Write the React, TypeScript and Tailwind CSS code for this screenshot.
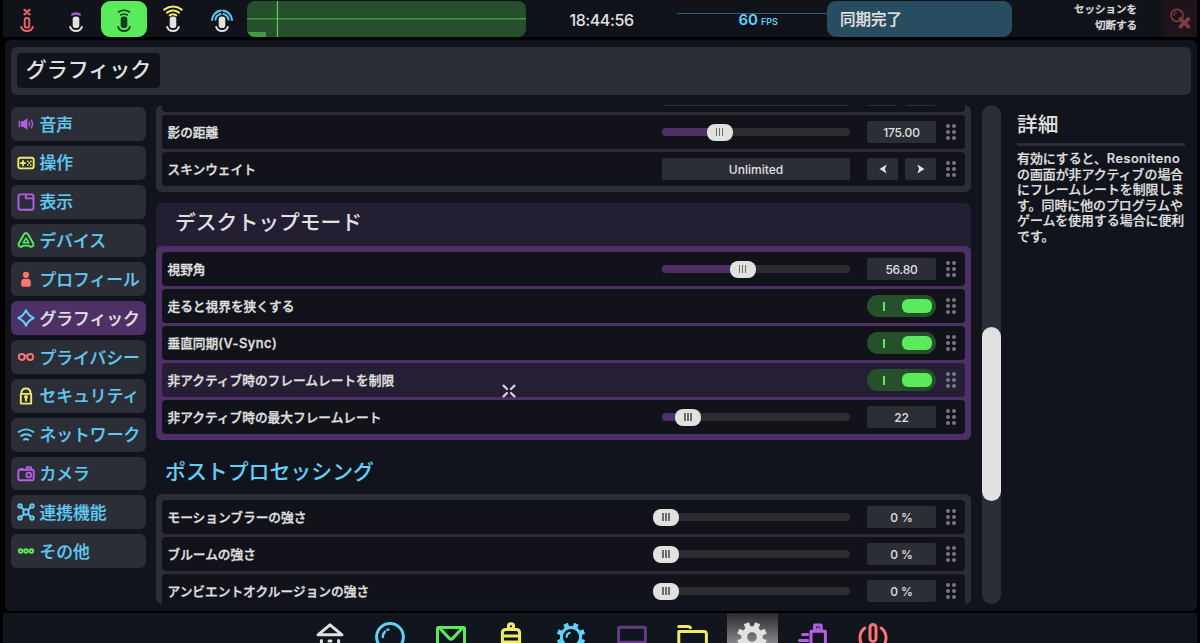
import React from 'react';
import clsx from 'clsx';

const LATIN = "font-['Inter','Noto_Sans_CJK_JP',sans-serif]";

interface IconProps {
  children: React.ReactNode;
  color: string;
}

// Sidebar glyph, 18px box
const SideIcon = ({ children, color }: IconProps) => (
  <svg
    viewBox="0 0 18 18"
    className="w-[18px] h-[18px] shrink-0"
    fill="none"
    stroke={color}
    strokeWidth={1.9}
    strokeLinecap="round"
    strokeLinejoin="round"
  >
    {children}
  </svg>
);

const CATEGORIES = [
  {
    label: '音声',
    icon: (
      <SideIcon color="#b45fe6">
        <path d="M3.8 6.2H6.2L10.4 3V15L6.2 11.8H3.8Z" fill="#b45fe6" stroke="none" />
        <path d="M2.3 6.3V11.7M12.2 7a3.5 3.5 0 0 1 0 4M14.2 5.2a6.5 6.5 0 0 1 0 7.6" strokeWidth={1.3} />
      </SideIcon>
    ),
  },
  {
    label: '操作',
    icon: (
      <SideIcon color="#f0ea6b">
        <rect x="1.3" y="3.8" width="15.4" height="10.6" rx="2.2" />
        <path d="M6 7v4.4M3.8 9.2h4.4" strokeWidth={1.8} />
        <path d="M10.8 7.4h.1M13.8 7.4h.1M12.3 9.2h.1M10.8 11h.1M13.8 11h.1" strokeWidth={1.7} />
      </SideIcon>
    ),
  },
  {
    label: '表示',
    icon: (
      <SideIcon color="#b45fe6">
        <rect x="1.5" y="1.4" width="15" height="15.4" rx="1.8" />
        <path d="M8.8 2v3.4h7.4" />
      </SideIcon>
    ),
  },
  {
    label: 'デバイス',
    icon: (
      <SideIcon color="#59eb5c">
        <path d="M7 3.3Q9 .8 11 3.3L16.3 12.4Q17 16 13.8 15.8L11.6 14.6H6.4L4.2 15.8Q1 16 1.7 12.4Z" />
        <path d="M9 7.2L11.8 11.8H6.2Z" strokeWidth={1.6} />
      </SideIcon>
    ),
  },
  {
    label: 'プロフィール',
    icon: (
      <SideIcon color="#ff7373">
        <circle cx="9" cy="4.8" r="3.1" fill="#ff7373" stroke="none" />
        <path d="M4.2 15V12.4Q4.2 8.8 7.2 8.8H10.8Q13.8 8.8 13.8 12.4V15Q13.8 16.8 12 16.8H6Q4.2 16.8 4.2 15Z" fill="#ff7373" stroke="none" />
      </SideIcon>
    ),
  },
  {
    label: 'グラフィック',
    active: true,
    icon: (
      <SideIcon color="#61d1fa">
        <path d="M9 1.2Q11.2 6.8 16.8 9Q11.2 11.2 9 16.8Q6.8 11.2 1.2 9Q6.8 6.8 9 1.2Z" />
      </SideIcon>
    ),
  },
  {
    label: 'プライバシー',
    icon: (
      <SideIcon color="#ff7373">
        <circle cx="4.8" cy="9" r="3" />
        <circle cx="13.2" cy="9" r="3" />
        <path d="M7.6 8Q9 7 10.4 8" />
      </SideIcon>
    ),
  },
  {
    label: 'セキュリティ',
    icon: (
      <SideIcon color="#f0ea6b">
        <path d="M3.8 6.9V16.6H14.2V6.9ZM4.4 6.5Q4.4 1.5 9 1.5Q13.6 1.5 13.6 6.5" />
        <circle cx="9" cy="10" r="1" fill="#f0ea6b" />
        <path d="M9 10.5v3.2" />
      </SideIcon>
    ),
  },
  {
    label: 'ネットワーク',
    icon: (
      <SideIcon color="#61d1fa">
        <path d="M1.6 6Q9 .8 16.4 6M4.2 9.9Q9 6.5 13.8 9.9M6.9 13.7Q9 12.3 11.1 13.7" />
      </SideIcon>
    ),
  },
  {
    label: 'カメラ',
    icon: (
      <SideIcon color="#b45fe6">
        <path d="M2.8 4.8H15.2Q16.7 4.8 16.7 6.5V13.8Q16.7 15.2 15.2 15.2H2.8Q1.3 15.2 1.3 13.8V6.5Q1.3 4.8 2.8 4.8Z" />
        <circle cx="11.8" cy="10" r="2.4" />
        <path d="M9.8 4.6V2.2H14V4.6M3.6 4H5.8" />
      </SideIcon>
    ),
  },
  {
    label: '連携機能',
    icon: (
      <SideIcon color="#61d1fa">
        <circle cx="3" cy="3" r="1.8" />
        <circle cx="15" cy="3" r="1.8" />
        <circle cx="3" cy="15" r="1.8" />
        <circle cx="15" cy="15" r="1.8" />
        <circle cx="9" cy="9" r="2.7" />
        <path d="M4.4 4.4L7 7M13.6 4.4L11 7M4.4 13.6L7 11M13.6 13.6L11 11" />
      </SideIcon>
    ),
  },
  {
    label: 'その他',
    icon: (
      <SideIcon color="#59eb5c">
        <circle cx="3.6" cy="9" r="1.8" />
        <circle cx="9" cy="9" r="1.8" />
        <circle cx="14.4" cy="9" r="1.8" />
      </SideIcon>
    ),
  },
];

interface MicProps {
  children?: React.ReactNode;
  color: string;
  hollow?: boolean;
}

const Mic = ({ children, color, hollow }: MicProps) => (
  <svg viewBox="0 0 24 36" className="w-6 h-9" fill="none" stroke={color} strokeWidth={1.9} strokeLinecap="round">
    {hollow ? (
      <rect x="9.7" y="17" width="4.6" height="9.6" rx="2.2" />
    ) : (
      <rect x="8.7" y="15.4" width="6.6" height="11.6" rx="2.8" fill={color} stroke="none" />
    )}
    <path d="M6.2 26Q7.4 30 12 30Q16.6 30 17.8 26" strokeWidth={2} />
    {children}
  </svg>
);

const TopBar = () => (
  <header className="flex h-[37px] pt-px ml-[3px] mr-[3px] bg-[#11131b] text-[#e1e1e0]">
    <div className="flex w-[244px] shrink-0">
      <div className="w-[47px] h-9 flex justify-center">
        <Mic color="#f0666a" hollow>
          <path d="M9.4 8.8L14.6 13.4M14.6 8.8L9.4 13.4" strokeWidth={2.1} />
        </Mic>
      </div>
      <div className="w-[51px] h-9 flex justify-center">
        <Mic color="#e1e1e0">
          <path d="M8.2 13.6Q12 11.4 15.8 13.6" stroke="#a457d8" strokeWidth={2.3} />
        </Mic>
      </div>
      <div className="w-[46px] h-9 rounded-[9px] bg-[#59eb5c] flex justify-center">
        <Mic color="#163d22">
          <path d="M6.4 11Q12 7.4 17.6 11M8.7 14Q12 12 15.3 14" strokeWidth={1.5} />
        </Mic>
      </div>
      <div className="w-[51px] h-9 flex justify-center">
        <Mic color="#e1e1e0">
          <path d="M3.2 8.6Q12 2.2 20.8 8.6M6 11.6Q12 7.2 18 11.6M8.7 14.4Q12 12 15.3 14.4" stroke="#f0ea6b" strokeWidth={2} />
        </Mic>
      </div>
      <div className="w-[47px] h-9 flex justify-center">
        <Mic color="#e1e1e0">
          <path
            d="M2 19A10 10 0 0 1 10.8 9.6M13.2 9.6A10 10 0 0 1 22 19M5.4 18.6A7 7 0 0 1 10.6 13M13.4 13A7 7 0 0 1 18.6 18.6"
            stroke="#61bfe6"
            strokeWidth={2.1}
          />
        </Mic>
      </div>
    </div>

    {/* Voice level meter */}
    <svg viewBox="0 0 279 36" className="w-[279px] h-9 shrink-0 rounded-[8px] bg-[#26502c]">
      <rect x="0" y="31" width="19" height="5" fill="#409c44" />
      <rect x="0" y="17" width="279" height="1.5" fill="#3f9a45" />
      <rect x="29.8" y="0" width="1.3" height="36" fill="#59c85c" />
    </svg>

    <div className={clsx('w-[151px] shrink-0 flex items-center justify-center pt-px text-[16px] tracking-[-0.4px] font-medium', LATIN)}>
      18:44:56
    </div>

    <div className="w-[150px] shrink-0 flex flex-col">
      <div className="h-px mt-3 bg-[#2b6076]" />
      <div className={clsx('-mt-[5px] h-[20px] pl-[61.5px] text-[#61d1fa] leading-[20px] font-semibold', LATIN)}>
        <span className="text-[15px]">60</span>
        <span className="text-[9px] ml-[3px]">FPS</span>
      </div>
    </div>

    <div className="w-[185px] h-9 shrink-0 rounded-[9px] bg-[#294d60] flex items-center pl-[13px] pb-px text-[15.5px] font-medium [-webkit-text-stroke:0.2px]">
      同期完了
    </div>

    <div className="flex-1 pr-[26px] text-right text-[10.5px] leading-[15.5px] font-medium [-webkit-text-stroke:0.3px]">
      セッションを
      <br />
      切断する
    </div>
    <div className="w-[34px] shrink-0 bg-[#1f141b] flex items-center justify-center">
      <svg viewBox="0 0 24 24" className="w-6 h-6" fill="none" stroke="#7d3c43">
        <circle cx="9" cy="8.4" r="6" strokeWidth={1.6} />
        <path d="M5.8 8.8A3.3 3.3 0 0 1 8.8 5.3" strokeWidth={1.3} />
        <path d="M12.4 12L20.4 19.6M20.4 12L12.4 19.6" strokeWidth={3.8} strokeLinecap="round" />
      </svg>
    </div>
  </header>
);

const DragDots = () => (
  <div className="w-[10px] ml-[10px] mr-[9px] grid grid-cols-2 gap-x-[2px] gap-y-[2px] shrink-0">
    {[0, 1, 2, 3, 4, 5].map((i) => (
      <span key={i} className="w-[3.8px] h-[3.8px] rounded-full bg-[#77787e]" />
    ))}
  </div>
);

const ValueBox = ({ children }: { children: React.ReactNode }) => (
  <div className={clsx('w-[69px] h-[22px] rounded-[2px] bg-[#2b2e36] flex items-center justify-center pt-px text-[12px] tracking-[-0.2px] font-medium', LATIN)}>
    {children}
  </div>
);

// offset: thumb centre from the start of the 188px track
const Slider = ({ offset }: { offset: number }) => (
  <div className="relative w-[188px] h-2 rounded-[4px] bg-[#2b2d33] mr-[17px]">
    <div className="h-2 rounded-l-[4px] bg-[#4d3166]" style={{ width: offset }} />
    <div
      className="absolute top-[-4.5px] -ml-[13px] w-[26px] h-[17px] rounded-[8px] bg-[#e1e1e0] flex items-center justify-center gap-[1.4px]"
      style={{ left: offset }}
    >
      <i className="w-[1.6px] h-[8.5px] bg-[#6c6c70]" />
      <i className="w-[1.6px] h-[8.5px] bg-[#6c6c70]" />
      <i className="w-[1.6px] h-[8.5px] bg-[#6c6c70]" />
    </div>
  </div>
);

const Toggle = () => (
  <div className="w-[69px] h-[22px] rounded-full bg-[#26502c] flex items-center pl-[16px] pr-1">
    <div className="w-[1.6px] h-[9px] bg-[#59eb5c]" />
    <div className="ml-auto w-[30px] h-[14px] rounded-[6px] bg-[#59eb5c]" />
  </div>
);

const Arrow = ({ flip }: { flip?: boolean }) => (
  <div className="w-[31px] h-[22px] rounded-[2px] bg-[#2b2e36] flex items-center justify-center">
    <svg viewBox="0 0 8 10" className={clsx('w-2 h-[10px]', flip && 'rotate-180')}>
      <path d="M.6 5L7.6 .6L6 5L7.6 9.4Z" fill="#e1e1e0" />
    </svg>
  </div>
);

const Choice = ({ text }: { text: string }) => (
  <>
    <div className={clsx('w-[188px] h-[22px] mr-[17px] rounded-[2px] bg-[#2b2e36] flex items-center justify-center pt-px text-[12px] font-medium', LATIN)}>
      {text}
    </div>
    <div className="w-[69px] flex justify-between">
      <Arrow />
      <Arrow flip />
    </div>
  </>
);

interface RowProps {
  label: React.ReactNode;
  hovered?: boolean;
  children: React.ReactNode;
}

const Row = ({ label, hovered, children }: RowProps) => (
  <div className={clsx('h-[34px] shrink-0 rounded-[4px] flex items-center pl-[5.5px]', hovered ? 'bg-[#261e34]' : 'bg-[#11121a]')}>
    <span className="flex-1 text-[12.7px] font-medium whitespace-nowrap [-webkit-text-stroke:0.3px]">{label}</span>
    {children}
    <DragDots />
  </div>
);

const SliderRow = ({ label, offset, value }: { label: string; offset: number; value: string }) => (
  <Row label={label}>
    <Slider offset={offset} />
    <ValueBox>{value}</ValueBox>
  </Row>
);

const Settings = () => (
  <div className="w-[815px] h-[499px] shrink-0 overflow-hidden rounded-[6px]">
    <div className="-mt-[32.5px] flex flex-col">
      <div className="rounded-[6px] bg-[#2b2e36] p-[6px] flex flex-col gap-[3px]">
        <Row label="">
          <Choice text="" />
        </Row>
        <SliderRow label="影の距離" offset={57.5} value="175.00" />
        <Row label="スキンウェイト">
          <Choice text="Unlimited" />
        </Row>
      </div>

      <h2 className="mt-[11px] h-[49px] pb-[12px] -mb-[6px] rounded-t-[7px] bg-[#241e33] pl-[19px] flex items-center text-[20.8px] font-medium">
        デスクトップモード
      </h2>
      <div className="rounded-[6px] bg-[#4d3166] p-[6px] flex flex-col gap-[3px]">
        <SliderRow label="視野角" offset={80.5} value="56.80" />
        <Row label="走ると視界を狭くする">
          <Toggle />
        </Row>
        <Row label={<>垂直同期<span className={clsx('text-[13px] tracking-[0.45px] font-medium', LATIN)}>(V-Sync)</span></>}>
          <Toggle />
        </Row>
        <Row label="非アクティブ時のフレームレートを制限" hovered>
          <Toggle />
        </Row>
        <SliderRow label="非アクティブ時の最大フレームレート" offset={26} value="22" />
      </div>

      <h2 className="h-[54px] pt-[8px] pl-[9px] flex items-center text-[20.9px] font-medium text-[#61d1fa]">
        ポストプロセッシング
      </h2>
      <div className="rounded-[6px] bg-[#2b2e36] p-[6px] flex flex-col gap-[3px]">
        <SliderRow label="モーションブラーの強さ" offset={4} value="0 %" />
        <SliderRow label="ブルームの強さ" offset={4} value="0 %" />
        <SliderRow label="アンビエントオクルージョンの強さ" offset={4} value="0 %" />
      </div>
    </div>
  </div>
);

interface DockIconProps {
  children: React.ReactNode;
  color: string;
  active?: boolean;
}

const DockIcon = ({ children, color, active }: DockIconProps) => (
  <div className="w-[60.3px] h-[30px] shrink-0 flex justify-center">
    <div className={clsx('w-[51px] flex justify-center', active && 'bg-linear-to-b from-[#2b2b2f] to-[#85858a]')}>
      <svg
        viewBox="0 0 34 34"
        className="w-[34px] h-[34px] shrink-0 mt-[7px]"
        fill="none"
        stroke={color}
        strokeWidth={3}
        strokeLinejoin="round"
        strokeLinecap="round"
      >
        {children}
      </svg>
    </div>
  </div>
);

const Teeth = ({ inner, outer, width }: { inner: number; outer: number; width: number }) => (
  <>
    {[22.5, 67.5, 112.5, 157.5, 202.5, 247.5, 292.5, 337.5].map((deg) => (
      <path key={deg} d={`M17 ${17 - inner}V${17 - outer}`} strokeWidth={width} strokeLinecap="butt" transform={`rotate(${deg} 17 17)`} />
    ))}
  </>
);

const Dock = () => (
  <footer className="mt-[2px] h-[30px] mx-[3px] bg-[#11151d] flex justify-center overflow-hidden">
    <div className="flex pl-[3px]">
      <DockIcon color="#e1e1e0">
        <path d="M17 4.8L29 14.8H5Z" />
        <path d="M8.4 20.6v10h17.2V20.6M16 21h2" />
      </DockIcon>
      <DockIcon color="#61d1fa">
        <circle cx="17" cy="17" r="13.4" />
        <path d="M9.8 17Q9.8 13.6 12 11.6M14.5 9.8L15.4 9.6" strokeWidth={2.5} />
      </DockIcon>
      <DockIcon color="#59eb5c">
        <rect x="3.5" y="7.4" width="27" height="20" rx="1" />
        <path d="M6.5 9L15.3 18.4Q17 20 18.7 18.4L27.5 9" />
      </DockIcon>
      <DockIcon color="#f0ea6b">
        <circle cx="17" cy="6.3" r="2.6" />
        <path d="M8.4 28V13Q8.4 9.6 11.8 9.6H22.2Q25.6 9.6 25.6 13V28M8.4 16H25.6M8.4 22H25.6" />
      </DockIcon>
      <DockIcon color="#61d1fa">
        <circle cx="17" cy="17" r="9.6" />
        <Teeth inner={9} outer={14.3} width={4.8} />
        <path d="M12.6 17A4.4 4.4 0 0 1 15.8 12.8" strokeWidth={2} />
      </DockIcon>
      <DockIcon color="#653a82">
        <rect x="3.6" y="7.2" width="26.8" height="15" rx="1" />
        <path d="M17 22.5v5" />
      </DockIcon>
      <DockIcon color="#f0ea6b">
        <path d="M3.8 28V11.4H29Q31.4 11.4 31.4 14V28" />
        <path d="M3.8 6.5H13.6L15.4 7.6" />
      </DockIcon>
      <DockIcon color="#e1e1e0" active>
        <circle cx="17" cy="17" r="7.8" strokeWidth={6} />
        <Teeth inner={9} outer={14.8} width={5.4} />
      </DockIcon>
      <DockIcon color="#b45fe6">
        <path d="M15 29V11.2H29.4V29M18.6 10.4V5H25.2V10.4M21.7 8.8h.4" />
        <path d="M6.6 14.6H11.6M3.6 20.6H11.6" />
      </DockIcon>
      <DockIcon color="#ff7373">
        <rect x="14" y="4.4" width="6" height="17" rx="3" />
        <path d="M8.8 8Q3.6 12 4 18.4Q4.4 24 8 28M25.2 8Q30.4 12 30 18.4Q29.6 24 26 28" />
      </DockIcon>
    </div>
  </footer>
);

export default function App() {
  return (
    <div className="relative w-[1200px] h-[643px] overflow-hidden bg-black text-[#e1e1e0] font-['Noto_Sans_CJK_JP','Noto_Sans',sans-serif]">
      <TopBar />

      <main className="mt-[3px] ml-[5px] mr-[3px] h-[571px] rounded-[6px] bg-[#11141c] pt-[7px] pl-[6px] pr-[6px]">
        <div className="h-[48px] rounded-[6px] bg-[#2b2e36] p-[6px]">
          <h1 className="w-[143px] h-[35px] rounded-[4px] bg-[#11131b] flex items-center justify-center text-[21px] font-medium pb-[4px]">
            グラフィック
          </h1>
        </div>

        <div className="flex mt-[9.5px]">
          <nav className="w-[135px] mt-[2.5px] flex flex-col gap-[5px] shrink-0">
            {CATEGORIES.map((item) => (
              <div
                key={item.label}
                className={clsx(
                  'h-[33.85px] rounded-[6px] flex items-center pl-[6px] gap-[4.5px] text-[16.8px] font-medium whitespace-nowrap [-webkit-text-stroke:0.2px]',
                  item.active ? 'bg-[#4d3166] text-[#e1e1e0]' : 'bg-[#2b2e36] text-[#61c8f0]',
                )}
              >
                {item.icon}
                <span className="leading-none">{item.label}</span>
              </div>
            ))}
          </nav>

          <div className="w-[10px] shrink-0" />
          <Settings />

          <div className="ml-[11px] w-[19px] h-[499.5px] shrink-0 rounded-full bg-[#2b2e36]">
            <div className="h-[222.5px]" />
            <div className="h-[174px] rounded-full bg-[#e1e1e1]" />
          </div>

          <aside className="ml-4 w-[170px] shrink-0 pt-[3px]">
            <h2 className="text-[20.7px] leading-[30px] font-medium">詳細</h2>
            <div className="mt-[5px] w-[168px] h-[3px] bg-[#2b2e36]" />
            <p className="mt-[4px] text-[12.9px] leading-[15.4px] font-medium whitespace-nowrap [-webkit-text-stroke:0.2px]">
              有効にすると、<span className={clsx('text-[12.8px] tracking-[0.5px]', LATIN)}>Resoniteno</span>
              <br />
              の画面が非アクティブの場合
              <br />
              にフレームレートを制限しま
              <br />
              す。同時に他のプログラムや
              <br />
              ゲームを使用する場合に便利
              <br />
              です。
            </p>
          </aside>
        </div>
      </main>

      <Dock />

      {/* Laser cursor */}
      <svg viewBox="0 0 16 16" className="absolute left-[501px] top-[383px] w-4 h-4" fill="none" stroke="#d9c9ec" strokeWidth={2.3} strokeLinecap="round">
        <path d="M2.6 2.6L6 6M13.4 2.6L10 6M2.6 13.4L6 10M13.4 13.4L10 10" />
      </svg>
    </div>
  );
}
